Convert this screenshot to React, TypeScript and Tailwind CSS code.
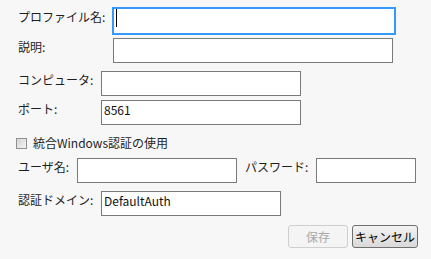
import React from "react";

const font = { fontFamily: '"Noto Sans CJK JP", "Noto Sans", sans-serif' };

function Box({ w, h = "h-[25px]", children, focused }: { w: string; h?: string; children?: React.ReactNode; focused?: boolean }) {
  return (
    <div
      className={`${w} ${h} bg-white ${focused ? "border-2 border-[#3399ff]" : "border border-[#7a7a7a]"} pl-[2px] pt-[1px] text-[12px] leading-[16px] text-[#111]`}
    >
      {children}
    </div>
  );
}

export default function App() {
  return (
    <div style={font} className="w-[431px] h-[259px] bg-[#f7f7f7] text-[12px] leading-[16px] text-[#1e1e1e] pl-[18px] pr-[13px] flex flex-col overflow-hidden">
      <div className="flex items-start mt-[7px]">
        <div className="w-[94px] mt-[2px] whitespace-nowrap">プロファイル名:</div>
        <Box w="w-[284px]" h="h-[28px]" focused>
          <div className="w-px h-[18px] bg-black mt-[-1px]" />
        </Box>
      </div>
      <div className="flex items-start mt-[3px]">
        <div className="w-[95px] mt-[1px] whitespace-nowrap">説明:</div>
        <Box w="w-[280px]" />
      </div>
      <div className="flex items-start mt-[8px]">
        <div className="w-[83px] mt-[1px] whitespace-nowrap">コンピュータ:</div>
        <Box w="w-[200px]" />
      </div>
      <div className="flex items-start mt-[4px]">
        <div className="w-[83px] mt-[1px] whitespace-nowrap">ポート:</div>
        <Box w="w-[200px]">8561</Box>
      </div>
      <div className="flex items-center mt-[11px] -ml-[2px] h-[14px]">
        <div className="w-[11px] h-[11px] border border-[#8f8f8f] bg-gradient-to-br from-[#dcdcdc] to-[#f4f4f4] p-[1px]">
          <div className="w-full h-full bg-gradient-to-br from-[#d6d6d6] to-[#f0f0f0]" />
        </div>
        <div className="ml-[6px] whitespace-nowrap">統合Windows認証の使用</div>
      </div>
      <div className="flex items-start mt-[8px]">
        <div className="w-[59px] mt-[1px] whitespace-nowrap">ユーザ名:</div>
        <Box w="w-[160px]" />
        <div className="w-[71px] ml-[8px] mt-[1px] whitespace-nowrap">パスワード:</div>
        <Box w="w-[100px]" />
      </div>
      <div className="flex items-start mt-[8px]">
        <div className="w-[83px] mt-[1px] whitespace-nowrap">認証ドメイン:</div>
        <Box w="w-[180px]">DefaultAuth</Box>
      </div>
      <div className="flex justify-end gap-[4px] mt-[9px]">
        <div className="w-[60px] h-[23px] border border-[#cfcfcf] rounded-[3px] bg-[#f4f4f4] text-[#a8a8a8] flex items-center justify-center">
          保存
        </div>
        <div className="w-[66px] h-[23px] border border-[#707070] rounded-[3px] bg-gradient-to-b from-[#f3f3f3] to-[#d9d9d9] text-black flex items-center justify-center whitespace-nowrap">
          キャンセル
        </div>
      </div>
    </div>
  );
}
